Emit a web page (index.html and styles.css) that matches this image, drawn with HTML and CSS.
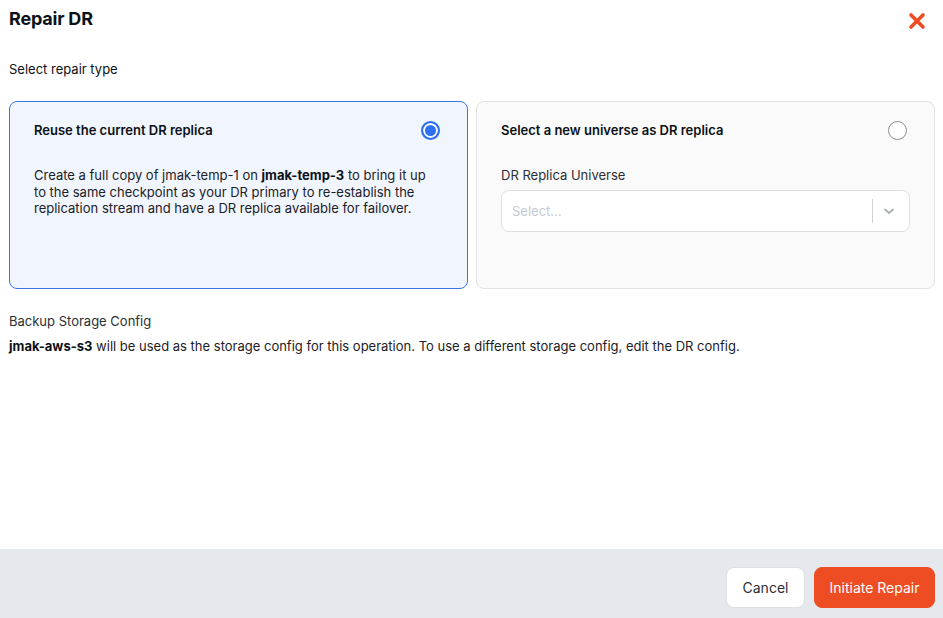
FILE: index.html
```html
<!DOCTYPE html>
<html>
<head>
<meta charset="utf-8">
<link rel="stylesheet" href="styles.css">
</head>
<body>
<div class="modal">
  <div class="header">
    <h1 class="title">Repair DR</h1>
    <button class="close" aria-label="Close">
      <svg width="18" height="18" viewBox="0 0 18 18"><path d="M3 3 L15 15 M15 3 L3 15" stroke="#ef4c23" stroke-width="3.6" stroke-linecap="round"/></svg>
    </button>
  </div>
  <div class="content">
    <div class="section-label">Select repair type</div>
    <div class="options">
      <div class="card selected">
        <div class="card-head">
          <span class="card-title">Reuse the current DR replica</span>
          <span class="radio on"></span>
        </div>
        <p class="card-text">Create a full copy of jmak-temp-1 on <b>jmak-temp-3</b> to bring it up to the same checkpoint as your DR primary to re-establish the replication stream and have a DR replica available for failover.</p>
      </div>
      <div class="card">
        <div class="card-head">
          <span class="card-title">Select a new universe as DR replica</span>
          <span class="radio"></span>
        </div>
        <div class="field-label">DR Replica Universe</div>
        <div class="select">
          <span class="placeholder">Select...</span>
          <span class="sep"></span>
          <svg class="chev" width="14" height="14" viewBox="0 0 14 14"><path d="M3 5.5 L7 9 L11 5.5" fill="none" stroke="#a9aeb4" stroke-width="1.8" stroke-linecap="round" stroke-linejoin="round"/></svg>
        </div>
      </div>
    </div>
    <div class="storage-label">Backup Storage Config</div>
    <div class="storage-text"><b>jmak-aws-s3</b> will be used as the storage config for this operation. To use a different storage config, edit the DR config.</div>
  </div>
  <div class="footer">
    <button class="btn cancel">Cancel</button>
    <button class="btn primary">Initiate Repair</button>
  </div>
</div>
</body>
</html>
```
FILE: styles.css
```css
* { box-sizing: border-box; }
html, body { margin: 0; padding: 0; background: #fff; }
body { font-family: Inter, "Noto Sans", sans-serif; color: #0b1117; }
.modal { width: 943px; height: 618px; display: flex; flex-direction: column; }
.header { display: flex; justify-content: space-between; align-items: flex-start; padding: 8px 9px 0 9px; height: 60px; }
.title { margin: 0; font-size: 18px; font-weight: 700; line-height: 22px; letter-spacing: -0.2px; }
.close { border: 0; background: none; padding: 0; margin: 4px 8px 0 0; width: 18px; height: 18px; display: flex; }
.content { flex: 1; padding: 0 8px 0 9px; }
.section-label { font-size: 13px; line-height: 18px; margin-top: 0; color: #0b1117; }
.options { display: grid; grid-template-columns: 1fr 1fr; gap: 8px; margin-top: 23px; }
.card { height: 188px; border: 1px solid #e3e3e5; border-radius: 8px; background: #fafafa; padding: 19px 24px 0 24px; }
.card.selected { border-color: #3d74e6; background: #f0f5fe; }
.card-head { display: flex; justify-content: space-between; align-items: center; height: 18px; }
.card-title { font-size: 13px; font-weight: 600; line-height: 18px; }
.radio { width: 19px; height: 19px; border-radius: 50%; border: 1.5px solid #8e8e93; background: #fff; margin-right: 3px; }
.radio.on { border: 2px solid #2e6ff2; box-shadow: inset 0 0 0 2px #fff; background: #2e6ff2; }
.card-text { margin: 28px 0 0 0; max-width: 400px; font-size: 13px; line-height: 16.5px; color: #1c2126; }
.card-text b { font-weight: 700; color: #0b1117; }
.field-label { margin-top: 28px; font-size: 13px; line-height: 16px; color: #2a2f35; }
.select { margin-top: 7px; height: 42px; border: 1px solid #dedfe2; border-radius: 8px; background: #fff; display: flex; align-items: center; padding: 0 13px 0 10px; }
.placeholder { flex: 1; font-size: 13px; color: #c4cad3; }
.sep { width: 1px; height: 24px; background: #cfd1d4; margin-right: 9px; }
.chev { display: block; }
.storage-label { margin-top: 24px; font-size: 13px; line-height: 16px; color: #2a2f35; }
.storage-text { margin-top: 9px; font-size: 13px; line-height: 16px; color: #1c2126; }
.storage-text b { font-weight: 700; color: #0b1117; }
.footer { height: 69px; background: #e5e9ee; display: flex; justify-content: flex-end; align-items: flex-start; gap: 9px; padding: 18px 8px 0 0; }
.btn { height: 41px; border-radius: 8px; font-family: Inter, "Noto Sans", sans-serif; font-size: 14px; padding: 0; white-space: nowrap; cursor: pointer; }
.cancel { width: 79px; background: #fff; border: 1px solid #dcdfe3; color: #2a2f35; }
.primary { width: 121px; background: #ee4d23; border: 1px solid #ee4d23; color: #fff; }
```
